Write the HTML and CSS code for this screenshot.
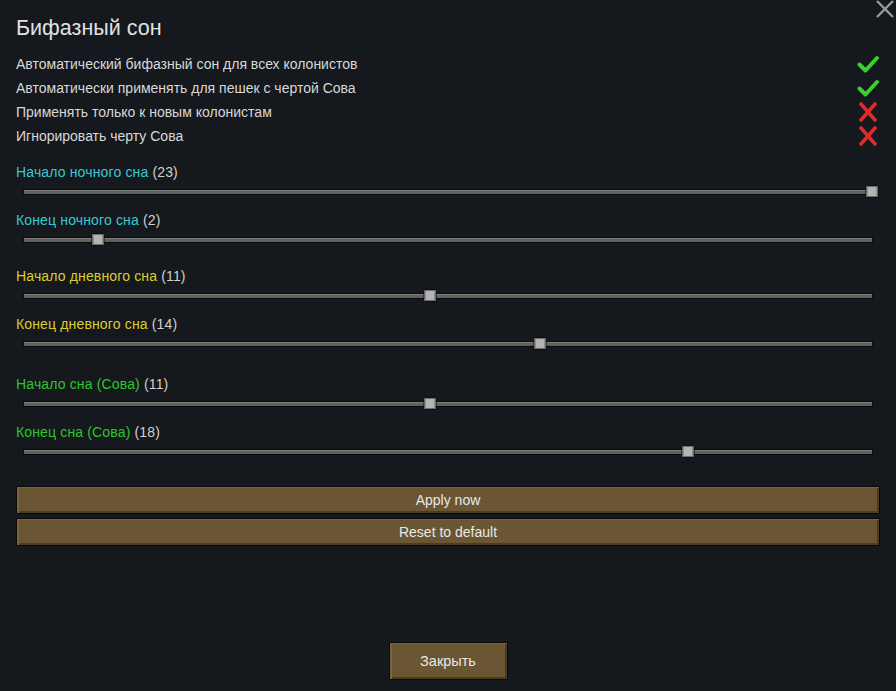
FILE: index.html
```html
<!DOCTYPE html>
<html lang="ru">
<head>
<meta charset="utf-8">
<link rel="stylesheet" href="styles.css">
</head>
<body>
<div class="window">
  <button class="close-x" aria-label="close">
    <svg width="20" height="20" viewBox="0 0 20 20"><path d="M2 1 L18 17 M18 1 L2 17" stroke="#9a9a9a" stroke-width="2.4" fill="none"/></svg>
  </button>
  <h1 class="title">Бифазный сон</h1>
  <div class="checks">
    <div class="check-row"><span>Автоматический бифазный сон для всех колонистов</span>
      <svg class="ico" viewBox="0 0 22 22"><path d="M2.5 11.5 L8.5 17.5 L20 5" stroke="#39d12e" stroke-width="4" fill="none" stroke-linecap="round" stroke-linejoin="round"/></svg></div>
    <div class="check-row"><span>Автоматически применять для пешек с чертой Сова</span>
      <svg class="ico" viewBox="0 0 22 22"><path d="M2.5 11.5 L8.5 17.5 L20 5" stroke="#39d12e" stroke-width="4" fill="none" stroke-linecap="round" stroke-linejoin="round"/></svg></div>
    <div class="check-row"><span>Применять только к новым колонистам</span>
      <svg class="ico" viewBox="0 0 22 22"><path d="M4 3 L18 19 M18 3 L4 19" stroke="#dd2a2a" stroke-width="3.6" fill="none" stroke-linecap="round"/></svg></div>
    <div class="check-row"><span>Игнорировать черту Сова</span>
      <svg class="ico" viewBox="0 0 22 22"><path d="M4 3 L18 19 M18 3 L4 19" stroke="#dd2a2a" stroke-width="3.6" fill="none" stroke-linecap="round"/></svg></div>
  </div>

  <div class="group">
    <div class="slider"><div class="label"><span class="cyan">Начало ночного сна</span> (23)</div>
      <div class="track-wrap"><div class="track"></div><div class="handle" style="left: calc(23 / 23 * 100%)"></div></div></div>
    <div class="slider"><div class="label"><span class="cyan">Конец ночного сна</span> (2)</div>
      <div class="track-wrap"><div class="track"></div><div class="handle" style="left: calc(2 / 23 * 100%)"></div></div></div>
  </div>
  <div class="group g2">
    <div class="slider"><div class="label"><span class="yellow">Начало дневного сна</span> (11)</div>
      <div class="track-wrap"><div class="track"></div><div class="handle" style="left: calc(11 / 23 * 100%)"></div></div></div>
    <div class="slider"><div class="label"><span class="yellow">Конец дневного сна</span> (14)</div>
      <div class="track-wrap"><div class="track"></div><div class="handle" style="left: calc(14 / 23 * 100%)"></div></div></div>
  </div>
  <div class="group g3">
    <div class="slider"><div class="label"><span class="green">Начало сна (Сова)</span> (11)</div>
      <div class="track-wrap"><div class="track"></div><div class="handle" style="left: calc(11 / 23 * 100%)"></div></div></div>
    <div class="slider"><div class="label"><span class="green">Конец сна (Сова)</span> (18)</div>
      <div class="track-wrap"><div class="track"></div><div class="handle" style="left: calc(18 / 23 * 100%)"></div></div></div>
  </div>

  <div class="actions">
    <button class="btn wide">Apply now</button>
    <button class="btn wide">Reset to default</button>
  </div>

  <div class="footer">
    <button class="btn close">Закрыть</button>
  </div>
</div>
</body>
</html>
```
FILE: styles.css
```css
html, body {
  margin: 0;
  padding: 0;
  background: #15181d;
}
body {
  font-family: "Liberation Sans", Arial, sans-serif;
  color: #d8d8d8;
  font-size: 14px;
}
.window {
  position: relative;
  box-sizing: border-box;
  min-height: 691px;
  display: flex;
  flex-direction: column;
  padding: 16px 16px 11px 16px;
}
.close-x {
  position: absolute;
  top: 0;
  right: 1px;
  width: 20px;
  height: 20px;
  padding: 0;
  border: 0;
  background: none;
}
.close-x svg { display: block; }
.title {
  margin: 0;
  font-weight: normal;
  font-size: 21.5px;
  line-height: 24px;
  color: #e2e2e2;
}
.checks {
  margin-top: 12px;
  display: flex;
  flex-direction: column;
}
.check-row {
  height: 24px;
  display: flex;
  align-items: center;
  justify-content: space-between;
}
.ico {
  width: 22px;
  height: 22px;
  margin-right: 1px;
}
.group {
  margin-top: 14px;
  display: flex;
  flex-direction: column;
}
.group.g2 { margin-top: 8px; }
.group.g3 { margin-top: 12px; }
.slider {
  height: 48px;
  display: flex;
  flex-direction: column;
}
.label {
  height: 21px;
  line-height: 21px;
  color: #d0d0d0;
  letter-spacing: 0.15px;
}
.cyan { color: #38c9d2; }
.yellow { color: #dccd2e; }
.green { color: #2cc62c; }
.track-wrap {
  position: relative;
  margin: 2px 8px 0 8px;
  height: 14px;
  display: flex;
  align-items: center;
}
.track {
  flex: 1;
  height: 3px;
  background: #5f615c;
  border-top: 1px solid #7d7f7a;
  box-shadow: 0 0 0 1px #0a0b0c;
}
.handle {
  position: absolute;
  top: 1px;
  box-sizing: border-box;
  width: 11px;
  height: 11px;
  transform: translateX(-50%);
  background: #b4b4b4;
  border: 1px solid #6c6c6c;
  box-shadow: 0 0 0 1px #111;
}
.actions {
  margin-top: 16px;
  display: flex;
  flex-direction: column;
  gap: 4px;
}
.btn {
  font-family: "Liberation Sans", Arial, sans-serif;
  font-size: 14px;
  color: #e8e8e8;
  background: #6b5634;
  border: 1px solid #0b0a08;
  box-shadow: inset 2px 1px 0 #7b6440, inset -2px -2px 0 #4b3b22;
  padding: 0;
  cursor: pointer;
}
.btn.wide {
  height: 28px;
  width: 864px;
}
.footer {
  margin-top: auto;
  display: flex;
  justify-content: center;
}
.btn.close {
  width: 119px;
  height: 38px;
  font-size: 14.5px;
}
```
